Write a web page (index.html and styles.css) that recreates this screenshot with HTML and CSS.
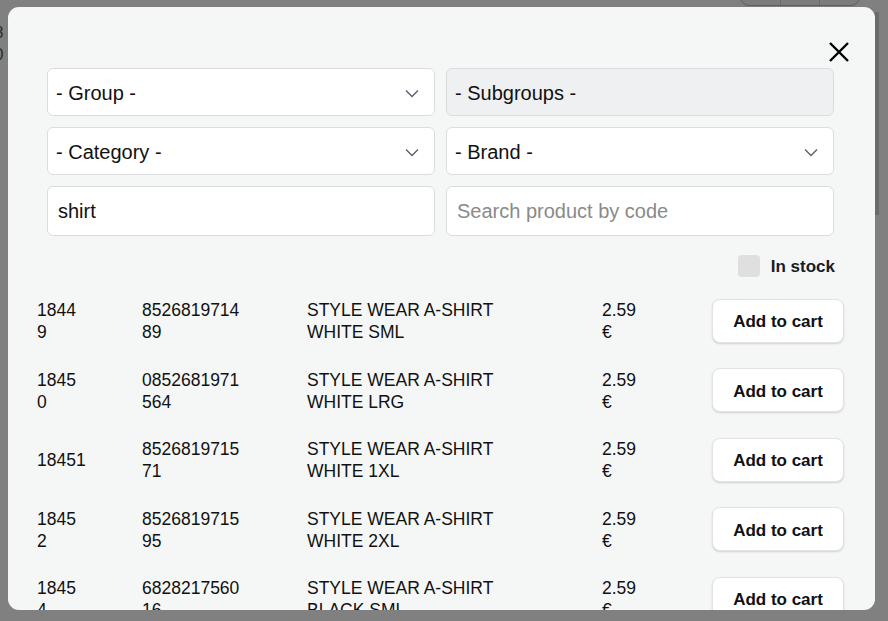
FILE: index.html
```html
<!DOCTYPE html>
<html lang="en">

<head>
    <meta charset="UTF-8">
    <meta name="viewport" content="width=device-width, initial-scale=1.0">
    <title>Products</title>
    <link rel="stylesheet" href="styles.css">
</head>

<body>
    <!-- page behind the dialog, dimmed -->
    <div class="page-behind">
        <div class="behind-cell">
            <span>8</span>
            <span>0</span>
        </div>
        <div class="behind-buttons">
            <span></span><span></span><span></span>
        </div>
    </div>

    <div class="modal">
        <div class="modal-head">
            <button class="close-btn" aria-label="Close">
                <svg width="20" height="20" viewBox="0 0 20 20">
                    <path d="M1 1 L19 19 M19 1 L1 19" stroke="#000" stroke-width="2.4" fill="none" />
                </svg>
            </button>
        </div>

        <div class="filters">
            <div class="field select">
                <span>- Group -</span>
                <svg class="chev" width="14" height="9" viewBox="0 0 14 9"><path d="M1 1.5 L7 7.5 L13 1.5" /></svg>
            </div>
            <div class="field select disabled">
                <span>- Subgroups -</span>
            </div>
            <div class="field select">
                <span>- Category -</span>
                <svg class="chev" width="14" height="9" viewBox="0 0 14 9"><path d="M1 1.5 L7 7.5 L13 1.5" /></svg>
            </div>
            <div class="field select">
                <span>- Brand -</span>
                <svg class="chev" width="14" height="9" viewBox="0 0 14 9"><path d="M1 1.5 L7 7.5 L13 1.5" /></svg>
            </div>
            <input class="field input" type="text" value="shirt">
            <input class="field input" type="text" placeholder="Search product by code">
        </div>

        <label class="stock">
            <span class="check"></span>
            <span>In stock</span>
        </label>

        <div class="results">
            <div class="row">
                <div class="id">18449</div>
                <div class="code">852681971489</div>
                <div class="name">STYLE WEAR A-SHIRT WHITE SML</div>
                <div class="price">2.59 €</div>
                <button class="cart-btn">Add to cart</button>
            </div>
            <div class="row">
                <div class="id">18450</div>
                <div class="code">0852681971564</div>
                <div class="name">STYLE WEAR A-SHIRT WHITE LRG</div>
                <div class="price">2.59 €</div>
                <button class="cart-btn">Add to cart</button>
            </div>
            <div class="row">
                <div class="id nowrap">18451</div>
                <div class="code">852681971571</div>
                <div class="name">STYLE WEAR A-SHIRT WHITE 1XL</div>
                <div class="price">2.59 €</div>
                <button class="cart-btn">Add to cart</button>
            </div>
            <div class="row">
                <div class="id">18452</div>
                <div class="code">852681971595</div>
                <div class="name">STYLE WEAR A-SHIRT WHITE 2XL</div>
                <div class="price">2.59 €</div>
                <button class="cart-btn">Add to cart</button>
            </div>
            <div class="row">
                <div class="id">18454</div>
                <div class="code">682821756016</div>
                <div class="name">STYLE WEAR A-SHIRT BLACK SML</div>
                <div class="price">2.59 €</div>
                <button class="cart-btn">Add to cart</button>
            </div>
        </div>

        <div class="scroll-thumb"></div>
    </div>
</body>

</html>
```

FILE: styles.css
```css
* {
    box-sizing: border-box;
}

body {
    margin: 0;
    padding: 0;
    width: 888px;
    height: 621px;
    overflow: hidden;
    background-color: #808080;
    font-family: "Liberation Sans", Arial, sans-serif;
    color: #111;
    position: relative;
}

/* page behind */
.page-behind {
    position: absolute;
    inset: 0;
}

.behind-cell {
    position: absolute;
    left: -6px;
    top: 22px;
    display: flex;
    flex-direction: column;
    font-size: 17px;
    line-height: 22px;
    color: #2e2e2e;
}

.behind-buttons {
    position: absolute;
    left: 740px;
    top: -24px;
    width: 120px;
    height: 30px;
    border: 1px solid #5f5f5f;
    border-radius: 9px;
    background-color: #7c7c7c;
    display: flex;
}

.behind-buttons span {
    flex: 1;
    border-right: 1px solid #6a6a6a;
}

.behind-buttons span:last-child {
    border-right: none;
}

/* dialog */
.modal {
    position: relative;
    margin: 7px 0 0 8px;
    width: 867px;
    height: 603px;
    background-color: #f5f7f7;
    border-radius: 11px;
    overflow: hidden;
}

.scroll-thumb {
    position: fixed;
    left: 875px;
    top: 12px;
    width: 4px;
    height: 203px;
    background-color: #6b6b6b;
}

.modal-head {
    height: 61px;
    display: flex;
    justify-content: flex-end;
    padding: 35px 25px 0 0;
}

.close-btn {
    width: 22px;
    height: 22px;
    padding: 0;
    border: none;
    background: none;
    cursor: pointer;
}

.filters {
    margin: 0 41px 0 39px;
    display: grid;
    grid-template-columns: 1fr 1fr;
    gap: 11px 11px;
}

.field {
    height: 48px;
    background-color: #fff;
    border: 1px solid #dcdcdc;
    border-radius: 6px;
    font-family: "Liberation Sans", Arial, sans-serif;
    font-size: 20px;
    color: #111;
}

.select {
    display: flex;
    align-items: center;
    justify-content: space-between;
    padding: 2px 15px 0 8px;
}

.select.disabled {
    background-color: #eff0f2;
}

.chev path {
    fill: none;
    stroke: #5b5b6b;
    stroke-width: 1.3;
}

.input {
    height: 50px;
    width: 100%;
    padding: 1px 10px 0;
    outline: none;
}

.input::placeholder {
    color: #8a8a8a;
}

.stock {
    margin: 19px 40px 0 0;
    display: flex;
    justify-content: flex-end;
    align-items: center;
    gap: 11px;
    font-size: 17px;
    font-weight: bold;
    color: #1b1b1b;
}

.stock span:last-child {
    padding-top: 2px;
}

.check {
    width: 22px;
    height: 22px;
    border-radius: 4px;
    background-color: #e0dfdf;
}

/* results */
.results {
    margin-top: 9px;
    padding-left: 29px;
}

.row {
    display: grid;
    grid-template-columns: 105px 165px 295px 110px 132px;
    align-items: center;
    padding: 12.25px 0;
    font-size: 17.5px;
    line-height: 22px;
}

.row div {
    padding-top: 1px;
}

.id {
    width: 40px;
    word-break: break-all;
}

.id.nowrap {
    white-space: nowrap;
}

.code {
    width: 100px;
    word-break: break-all;
}

.name {
    width: 200px;
}

.price {
    width: 40px;
}

.cart-btn {
    width: 132px;
    height: 44px;
    padding: 3px 0 0;
    background-color: #fff;
    border: 1px solid #e3e3e3;
    border-radius: 8px;
    box-shadow: 0 1px 2px rgba(0, 0, 0, 0.15);
    font-family: "Liberation Sans", Arial, sans-serif;
    font-size: 17px;
    font-weight: bold;
    color: #111;
    cursor: pointer;
}
```
